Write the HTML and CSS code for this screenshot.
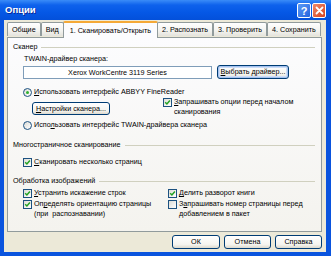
FILE: index.html
```html
<!DOCTYPE html>
<html lang="ru">
<head>
  <meta charset="UTF-8">
  <title>Опции</title>
  <link rel="stylesheet" href="styles.css">
</head>
<body>

  <div class="window">
    <div class="titlebar">
      <span class="title">Опции</span>
      <div class="caption-buttons">
        <span class="cap-btn help">?</span>
        <span class="cap-btn close">
          <svg width="9" height="9" viewBox="0 0 9 9"><path d="M1.5 1.5 L7.5 7.5 M7.5 1.5 L1.5 7.5" stroke="#fff" stroke-width="1.8" stroke-linecap="round"/></svg>
        </span>
      </div>
    </div>

    <div class="client">
      <div class="tabs">
        <span class="tab">Общие</span>
        <span class="tab">Вид</span>
        <span class="tab active">1. Сканировать/Открыть</span>
        <span class="tab">2. Распознать</span>
        <span class="tab">3. Проверить</span>
        <span class="tab">4. Сохранить</span>
      </div>

      <div class="panel">
        <div class="group-title"><span>Сканер</span></div>
        <div class="indent">
          <div class="label">TWAIN-драйвер сканера:</div>
          <div class="driver-row">
            <div class="textbox">Xerox WorkCentre 3119 Series</div>
            <span class="btn focused"><u>В</u>ыбрать драйвер...</span>
          </div>

          <div class="option radio-row">
            <span class="radio checked"></span>
            <span><u>И</u>спользовать интерфейс ABBYY FineReader</span>
          </div>

          <div class="settings-row">
            <div class="settings-left">
              <span class="btn settings-btn"><u>Н</u>астройки сканера...</span>
            </div>
            <div class="option">
              <span class="check"><svg viewBox="0 0 7 7"><path d="M1.2 3.3 L2.9 5 L5.9 1.6"/></svg></span>
              <span><u>З</u>апрашивать опции перед началом<br>сканирования</span>
            </div>
          </div>

          <div class="option radio-row2">
            <span class="radio"></span>
            <span>Испо<u>л</u>ьзовать интерфейс TWAIN-драйвера сканера</span>
          </div>
        </div>

        <div class="group-title multi"><span>Многостраничное сканирование</span></div>
        <div class="indent">
          <div class="option multi-check">
            <span class="check"><svg viewBox="0 0 7 7"><path d="M1.2 3.3 L2.9 5 L5.9 1.6"/></svg></span>
            <span><u>С</u>канировать несколько страниц</span>
          </div>
        </div>

        <div class="group-title images"><span>Обработка изображений</span></div>
        <div class="indent image-grid">
          <div class="option">
            <span class="check"><svg viewBox="0 0 7 7"><path d="M1.2 3.3 L2.9 5 L5.9 1.6"/></svg></span>
            <span><u>У</u>странить искажение строк</span>
          </div>
          <div class="option">
            <span class="check"><svg viewBox="0 0 7 7"><path d="M1.2 3.3 L2.9 5 L5.9 1.6"/></svg></span>
            <span><u>Д</u>елить разворот книги</span>
          </div>
          <div class="option">
            <span class="check"><svg viewBox="0 0 7 7"><path d="M1.2 3.3 L2.9 5 L5.9 1.6"/></svg></span>
            <span>Оп<u>р</u>еделять ориентацию страницы<br>(при&nbsp; распознавании)</span>
          </div>
          <div class="option">
            <span class="check"></span>
            <span>З<u>а</u>прашивать номер страницы перед<br>добавлением в пакет</span>
          </div>
        </div>
      </div>

      <div class="dialog-buttons">
        <span class="btn ok">ОК</span>
        <span class="btn cancel">Отмена</span>
        <span class="btn help-btn">Справка</span>
      </div>
    </div>
  </div>

</body>
</html>
```

FILE: styles.css
```css
body {
  margin: 0;
  font-family: "Liberation Sans", "DejaVu Sans", sans-serif;
  font-size: 7.2px;
  line-height: 10px;
  color: #000;
}

.window {
  width: 331px;
  height: 256px;
  display: flex;
  flex-direction: column;
  background: #0A54DE;
  overflow: hidden;
}

.titlebar {
  height: 20px;
  flex-shrink: 0;
  display: flex;
  align-items: center;
  justify-content: space-between;
  padding: 0 5px 0 5px;
  background: linear-gradient(#3A8CF8, #0E62EC 25%, #0558E6 60%, #0350DA);
}

.title {
  color: #fff;
  font-weight: bold;
  font-size: 9.5px;
  text-shadow: 1px 1px #0B2A98;
}

.caption-buttons {
  display: flex;
  gap: 1px;
  padding-top: 1px;
}

.cap-btn {
  width: 12px;
  height: 13px;
  border: 1px solid #fff;
  border-radius: 2px;
  display: flex;
  align-items: center;
  justify-content: center;
  color: #fff;
  font-weight: bold;
  font-size: 11px;
}

.help {
  background: linear-gradient(135deg, #5C9BF6, #2463DE);
}

.close {
  background: linear-gradient(135deg, #EE8A6A, #D7421E);
}

.client {
  flex: 1;
  display: flex;
  flex-direction: column;
  margin: 0 5px 4px 4px;
  padding: 2px 0 0 3px;
  background: #ECE9D8;
}

/* tabs */
.tabs {
  display: flex;
  align-items: flex-end;
  height: 15px;
  position: relative;
  z-index: 1;
}

.tab {
  height: 13px;
  padding: 0 4px;
  border: 1px solid #919B9C;
  border-bottom: none;
  border-radius: 2px 2px 0 0;
  background: linear-gradient(#FFFFFF, #F3F3EF 60%, #E4E3DC);
  display: flex;
  align-items: center;
  white-space: nowrap;
  margin-bottom: 1px;
}

.tab.active {
  height: 15px;
  margin: 0 -1px -1px;
  padding: 0 6px;
  background: #FCFCFE;
  border-top: 2px solid #F5A937;
  position: relative;
}

/* page */
.panel {
  height: 195px;
  box-sizing: border-box;
  width: 315px;
  border: 1px solid #919B9C;
  background: linear-gradient(#FCFCFE, #F4F3EE);
  padding: 4px 6px 0 5px;
  white-space: nowrap;
}

.group-title {
  display: flex;
  align-items: center;
  gap: 4px;
}

.group-title::after {
  content: "";
  flex: 1;
  height: 1px;
  background: #D0D0BF;
}

.group-title.multi {
  margin-top: 10px;
}

.group-title.images {
  margin-top: 9px;
}

.indent {
  padding-left: 10px;
}

.label {
  margin-top: 2px;
  padding-left: 1px;
}

.driver-row {
  display: flex;
  align-items: center;
  gap: 5px;
  margin-top: 1px;
  height: 14px;
}

.textbox {
  width: 187px;
  height: 11px;
  border: 1px solid #7F9DB9;
  background: #fff;
  text-align: center;
  line-height: 11px;
}

.btn {
  display: inline-flex;
  align-items: center;
  justify-content: center;
  box-sizing: border-box;
  height: 14px;
  border: 1px solid #003C74;
  border-radius: 3px;
  background: linear-gradient(#FFFFFF, #F5F4EF 70%, #DDD9CD);
  white-space: nowrap;
}

.btn.focused {
  width: 72px;
  box-shadow: inset 0 0 0 1px #A4C2F0, inset 0 0 0 2px #CEDDF6;
}

.option {
  display: flex;
  align-items: flex-start;
  gap: 2px;
}

.radio-row {
  margin-top: 8px;
}

.radio,
.check {
  flex-shrink: 0;
  box-sizing: border-box;
  width: 9px;
  height: 9px;
  border: 1px solid #1C5180;
  background: linear-gradient(135deg, #DCDCD6, #FFFFFF);
  margin-top: 0.5px;
  position: relative;
}

.check svg {
  display: block;
  width: 7px;
  height: 7px;
  fill: none;
  stroke: #21A121;
  stroke-width: 1.5;
}

.radio {
  border-radius: 50%;
}

.radio.checked::after {
  content: "";
  position: absolute;
  left: 2px;
  top: 2px;
  width: 3px;
  height: 3px;
  border-radius: 50%;
  background: #2FB12F;
}

.settings-row {
  display: flex;
}

.settings-left {
  width: 131px;
  flex-shrink: 0;
  padding-left: 9px;
  padding-top: 5px;
}

.settings-btn {
  width: 78px;
  height: 13px;
}

.radio-row2 {
  margin-top: 3px;
}

.multi-check {
  margin-top: 7px;
}

.image-grid {
  display: grid;
  grid-template-columns: 145px 1fr;
  margin-top: 2px;
  row-gap: 1px;
}

.dialog-buttons {
  display: flex;
  justify-content: flex-end;
  gap: 4px;
  margin-top: 3px;
  padding-right: 4px;
}

.ok,
.cancel,
.help-btn {
  width: 47px;
}

.ok {
  width: 48px;
}
```
